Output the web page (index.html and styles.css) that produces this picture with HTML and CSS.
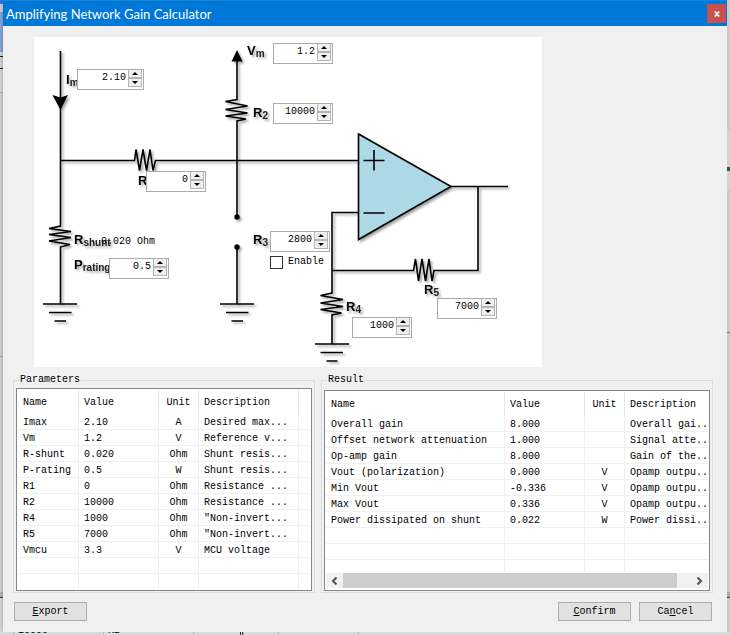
FILE: index.html
```html
<!DOCTYPE html>
<html lang="en">
<head>
<meta charset="utf-8">
<title>Amplifying Network Gain Calculator</title>
<link rel="stylesheet" href="styles.css">
</head>
<body>
<div class="desktop">
  <div class="edge edge-left"></div>
  <main class="dialog">
    <header class="titlebar">
      <h1>Amplifying Network Gain Calculator</h1>
      <button class="close" aria-label="Close"><svg width="6" height="6" viewBox="0 0 6 6"><path d="M.8 .5L5.2 5.5M5.2 .5L.8 5.5" stroke="#fff" stroke-width="1.6"/></svg></button>
    </header>
    <form class="content">
      <div class="canvas">
        <svg class="circuit" viewBox="34 37 508 330" role="img" aria-label="Amplifying network circuit">
          <g class="shade">
            <path class="amp" d="M358.5 134L451 186.500L358.5 239.500Z"/>
            <g class="wire">
              <path d="M60.500 51V226L49 228.500L71 231.500L49 234.500L71 237.500L49 241L70 244.500L60.500 247V304"/>
              <path d="M60.500 160.500H134.500L136 149.500L139.500 170.500L143 149.500L146.500 170.500L150 149.500L153 170.500L155.500 160.500H358.500"/>
              <path d="M237 58V99.500L225.500 101.500L247.500 106L225.500 109.500L247.500 113L225.500 116L246 119L237 121V217M237 247V304"/>
              <path d="M358.500 212.500H332V293L320.500 295.500L343 299.500L320.500 303L343 306.500L320.500 309.500L341.500 313L332 315V344"/>
              <path d="M332 270.500H413.500L415.500 259L418.500 281L422 259L425.500 281L429 259L432 281L434 270.500H478V186.500M451 186.500H508"/>
              <path d="M43 304H77M49 312.500H71.500M54.500 321H66M220 304H254M226 312.500H248.500M231.500 321H243M315 344H349M320.500 352.500H343M326.500 361H337.500"/>
              <path d="M363.500 160.500H384.500M374 150V170.500M363.500 213H384.500"/>
            </g>
            <path d="M52.500 95L60.500 97.500L68 95L60.500 110ZM237 50L242.500 61.500H231.500Z"/>
            <circle cx="237" cy="217" r="2.700"/><circle cx="237" cy="247" r="2.700"/>
            <g class="labels">
              <text x="66" y="84">I<tspan class="sub" dy="2">m</tspan></text>
              <text x="138" y="185">R</text>
              <text x="247" y="55">V<tspan class="sub" dy="2">m</tspan></text>
              <text x="253" y="117">R<tspan class="sub" dy="2">2</tspan></text>
              <text x="253" y="244">R<tspan class="sub" dy="2">3</tspan></text>
              <text x="74" y="244">R<tspan class="sub" dy="2">shunt</tspan></text>
              <text x="74" y="269">P<tspan class="sub" dy="2">rating</tspan></text>
              <text x="346" y="311">R<tspan class="sub" dy="2">4</tspan></text>
              <text x="424" y="294">R<tspan class="sub" dy="2">5</tspan></text>
            </g>
          </g>
        </svg>
        <div class="spin at-im"><input type="text" aria-label="Im" value="2.10"><span class="arrows"><button type="button" class="up" aria-label="Increase"></button><button type="button" class="down" aria-label="Decrease"></button></span></div>
        <div class="spin at-vm"><input type="text" aria-label="Vm" value="1.2"><span class="arrows"><button type="button" class="up" aria-label="Increase"></button><button type="button" class="down" aria-label="Decrease"></button></span></div>
        <div class="spin at-r2"><input type="text" aria-label="R2" value="10000"><span class="arrows"><button type="button" class="up" aria-label="Increase"></button><button type="button" class="down" aria-label="Decrease"></button></span></div>
        <div class="spin at-r1"><input type="text" aria-label="R1" value="0"><span class="arrows"><button type="button" class="up" aria-label="Increase"></button><button type="button" class="down" aria-label="Decrease"></button></span></div>
        <div class="spin at-r3"><input type="text" aria-label="R3" value="2800"><span class="arrows"><button type="button" class="up" aria-label="Increase"></button><button type="button" class="down" aria-label="Decrease"></button></span></div>
        <div class="spin at-pr"><input type="text" aria-label="P rating" value="0.5"><span class="arrows"><button type="button" class="up" aria-label="Increase"></button><button type="button" class="down" aria-label="Decrease"></button></span></div>
        <div class="spin at-r4"><input type="text" aria-label="R4" value="1000"><span class="arrows"><button type="button" class="up" aria-label="Increase"></button><button type="button" class="down" aria-label="Decrease"></button></span></div>
        <div class="spin at-r5"><input type="text" aria-label="R5" value="7000"><span class="arrows"><button type="button" class="up" aria-label="Increase"></button><button type="button" class="down" aria-label="Decrease"></button></span></div>
        <output class="at-shunt">0.020 Ohm</output>
        <label class="enable"><input type="checkbox">Enable</label>
      </div>

      <div class="groups">
        <fieldset>
          <legend>Parameters</legend>
          <div class="list">
            <table>
              <colgroup><col class="c-name"><col class="c-value"><col class="c-unit"><col class="c-desc"><col></colgroup>
              <thead><tr><th>Name</th><th>Value</th><th class="unit">Unit</th><th>Description</th><th></th></tr></thead>
              <tbody>
                <tr><td>Imax</td><td>2.10</td><td class="unit">A</td><td>Desired max...</td><td></td></tr>
                <tr><td>Vm</td><td>1.2</td><td class="unit">V</td><td>Reference v...</td><td></td></tr>
                <tr><td>R-shunt</td><td>0.020</td><td class="unit">Ohm</td><td>Shunt resis...</td><td></td></tr>
                <tr><td>P-rating</td><td>0.5</td><td class="unit">W</td><td>Shunt resis...</td><td></td></tr>
                <tr><td>R1</td><td>0</td><td class="unit">Ohm</td><td>Resistance ...</td><td></td></tr>
                <tr><td>R2</td><td>10000</td><td class="unit">Ohm</td><td>Resistance ...</td><td></td></tr>
                <tr><td>R4</td><td>1000</td><td class="unit">Ohm</td><td>"Non-invert...</td><td></td></tr>
                <tr><td>R5</td><td>7000</td><td class="unit">Ohm</td><td>"Non-invert...</td><td></td></tr>
                <tr><td>Vmcu</td><td>3.3</td><td class="unit">V</td><td>MCU voltage</td><td></td></tr>
                <tr><td></td><td></td><td></td><td></td><td></td></tr>
                <tr class="last"><td></td><td></td><td></td><td></td><td></td></tr>
              </tbody>
            </table>
          </div>
        </fieldset>
        <fieldset class="result">
          <legend>Result</legend>
          <div class="list">
            <table>
              <colgroup><col class="c-name"><col class="c-value"><col class="c-unit"><col></colgroup>
              <thead><tr><th>Name</th><th>Value</th><th class="unit">Unit</th><th>Description</th></tr></thead>
              <tbody>
                <tr><td>Overall gain</td><td>8.000</td><td></td><td>Overall gai..</td></tr>
                <tr><td>Offset network attenuation</td><td>1.000</td><td></td><td>Signal atte..</td></tr>
                <tr><td>Op-amp gain</td><td>8.000</td><td></td><td>Gain of the..</td></tr>
                <tr><td>Vout (polarization)</td><td>0.000</td><td class="unit">V</td><td>Opamp outpu..</td></tr>
                <tr><td>Min Vout</td><td>-0.336</td><td class="unit">V</td><td>Opamp outpu..</td></tr>
                <tr><td>Max Vout</td><td>0.336</td><td class="unit">V</td><td>Opamp outpu..</td></tr>
                <tr><td>Power dissipated on shunt</td><td>0.022</td><td class="unit">W</td><td>Power dissi..</td></tr>
                <tr><td></td><td></td><td></td><td></td></tr>
                <tr><td></td><td></td><td></td><td></td></tr>
                <tr class="last"><td></td><td></td><td></td><td></td></tr>
              </tbody>
            </table>
            <div class="scrollbar">
              <button type="button" aria-label="Scroll left"><svg width="7" height="8" viewBox="0 0 7 8"><path d="M5.500 .5L2 4L5.500 7.500"/></svg></button>
              <div class="track"><div class="thumb"></div></div>
              <button type="button" aria-label="Scroll right"><svg width="7" height="8" viewBox="0 0 7 8"><path d="M1.500 .5L5 4L1.500 7.500"/></svg></button>
            </div>
          </div>
        </fieldset>
      </div>

      <div class="actions">
        <button type="button" class="btn"><u>E</u>xport</button>
        <button type="button" class="btn confirm"><u>C</u>onfirm</button>
        <button type="button" class="btn">Ca<u>n</u>cel</button>
      </div>
    </form>
  </main>
  <div class="edge edge-right"></div>
  <div class="behind"><span>10000</span><span>R2</span><span class="dark"></span><span></span><span></span><span></span></div>
</div>
</body>
</html>
```
FILE: styles.css
```css
* { box-sizing: border-box; }

body {
  margin: 0;
  background: #d6d6d6;
  color: #000;
  font: 10px/16px "Liberation Mono", monospace;
}

button, input { font: inherit; color: inherit; }

.desktop {
  display: grid;
  grid-template-columns: 3px minmax(0, 1fr) 3px;
  grid-template-rows: 1fr 3px;
  min-height: 100vh;
  overflow: hidden;
}

.edge-left {
  background: linear-gradient(#3b78e7 0 4px, #d9d9d9 4px 12px, #8ca9df 12px 52px, #d9d9d9 52px 56px, #222 56px 57px, #d9d9d9 57px 68px, #222 68px 69px, #dedede 69px 92px, #bbb 92px 93px, #d9d9d9 93px 356px, #b5b5b5 356px 357px, #d9d9d9 357px 592px, #bdbdbd 592px 597px, #444 597px 598px, #dedede 598px);
}

.edge-right {
  background: linear-gradient(#c9c9c9 0 130px, #d2d2d2 130px 167px, #1c6b2c 167px 171px, #d2d2d2 171px 190px, #c9c9c9 190px 332px, #777 332px 333px, #c9c9c9 333px 592px, #aaa 592px 597px, #444 597px 598px, #c9c9c9 598px);
}

.dialog {
  background: #f0f0f0;
  box-shadow: 0 0 5px rgba(0, 0, 0, .35);
}

.titlebar {
  display: flex;
  align-items: center;
  justify-content: space-between;
  height: 26px;
  padding: 0 1px 0 3px;
  background: #0078d7;
  border-top: 1px solid #1883d9;
  color: #fff;
}

.titlebar h1 {
  margin: 0;
  font: 13px/16px Lato, "Noto Sans", sans-serif;
}

.close {
  display: grid;
  place-items: center;
  width: 19px;
  height: 19px;
  padding: 0;
  border: 0;
  background: #c75050;
}

.content { padding: 11px 14px 11px 10px; }

.canvas {
  position: relative;
  width: 508px;
  margin: 0 0 5px 21px;
  background: #fff;
}

.circuit { display: block; width: 100%; }
.shade { filter: drop-shadow(2px 2px 1px rgba(0, 0, 0, .35)); }
.wire { fill: none; stroke: #000; stroke-width: 1.6; }
.amp { fill: #add8e6; stroke: #000; stroke-width: 1.6; }
.labels { font: bold 13px "Liberation Sans", sans-serif; }
.sub { font-size: 10px; fill: #222; }

/* Fields pinned on the schematic */
.spin {
  position: absolute;
  display: flex;
  width: 60px;
  height: 21px;
  padding-right: 1px;
  border: 1px solid #ababab;
  background: #fff;
}

.spin input {
  flex: 1;
  min-width: 0;
  height: 16px;
  padding: 0 2px 0 0;
  border: 0;
  outline: 0;
  background: none;
  text-align: right;
}

.arrows { display: flex; flex-direction: column; width: 14px; height: 17px; }

.arrows button {
  display: grid;
  place-items: center;
  flex: 1;
  padding: 0;
  border: 1px solid #b4b4b4;
  background: #f0f0f0;
}

.arrows .up { border-top: 0; }

.arrows button::before {
  content: "";
  border: 3px solid transparent;
}

.arrows .up::before { border-top: 0; border-bottom-color: #000; }
.arrows .down::before { border-bottom: 0; border-top-color: #000; }

.at-im { left: 43px; top: 32px; width: 67px; }
.at-vm { left: 239px; top: 6px; }
.at-r2 { left: 239px; top: 66px; }
.at-r1 { left: 112px; top: 134px; }
.at-r3 { left: 236px; top: 194px; }
.at-pr { left: 75px; top: 221px; }
.at-r4 { left: 318px; top: 280px; }
.at-r5 { left: 403px; top: 261px; }
.at-shunt { position: absolute; left: 67px; top: 197px; }

.enable {
  position: absolute;
  left: 236px;
  top: 217px;
  display: flex;
  align-items: center;
  gap: 5px;
}

.enable input {
  appearance: none;
  width: 13px;
  height: 13px;
  margin: 0;
  border: 1px solid #333;
  background: #fff;
}

.groups {
  display: grid;
  grid-template-columns: 302fr 392fr;
  gap: 6px;
}

fieldset {
  min-width: 0;
  margin: 0;
  padding: 0 2px 1px;
  border: 1px solid #dcdcdc;
}

fieldset.result { padding-top: 2px; }
legend { margin-left: 3px; padding: 0 1px; }

.list {
  padding: 1px;
  border: 1px solid #828790;
  background: #fff;
}

table {
  width: 100%;
  table-layout: fixed;
  border-collapse: separate;
  border-spacing: 0;
}

.c-name { width: 61px; }
.c-value { width: 80px; }
.c-unit { width: 40px; }
.c-desc { width: 100px; }
.result .c-name { width: 179px; }

th, td {
  padding: 2px 0 0 5px;
  border-right: 1px solid #f0f0f0;
  font-weight: normal;
  text-align: left;
  white-space: nowrap;
}

th { height: 24px; border-color: #e5e5e5; }
td { height: 16px; line-height: 13px; border-bottom: 1px solid #f0f0f0; }
th:last-child, td:last-child { border-right: 0; }
th.unit, td.unit { padding-left: 0; text-align: center; }
.last td { height: 15px; border-bottom: 0; }
.result .last td { height: 12px; }

.scrollbar {
  display: flex;
  height: 15px;
  margin: 1px 0;
  background: #f0f0f0;
}

.scrollbar button {
  display: grid;
  place-items: center;
  width: 17px;
  padding: 0;
  border: 0;
  background: none;
}

.scrollbar path { fill: none; stroke: #505050; stroke-width: 2; }
.track { flex: 1; }
.thumb { width: 96%; height: 100%; background: #cdcdcd; }

.actions {
  display: flex;
  gap: 8px;
  margin-top: 9px;
  padding: 0 1px;
}

.btn {
  width: 73px;
  height: 19px;
  padding: 0;
  border: 1px solid #adadad;
  background: #e1e1e1;
}

.confirm { margin-left: auto; }

/* Bottom of the window behind the dialog */
.behind {
  grid-column: 1 / -1;
  display: grid;
  grid-template-columns: 90px 90px 50px 35px 80px 60px;
  align-items: end;
  align-content: end;
  height: 3px;
  padding-left: 13px;
  background: #dadada;
  overflow: hidden;
}

.behind span { height: 12px; line-height: 16px; padding-left: 4px; border-left: 1px solid #bbb; }
.behind .dark { border-right: 3px double #333; }
```
